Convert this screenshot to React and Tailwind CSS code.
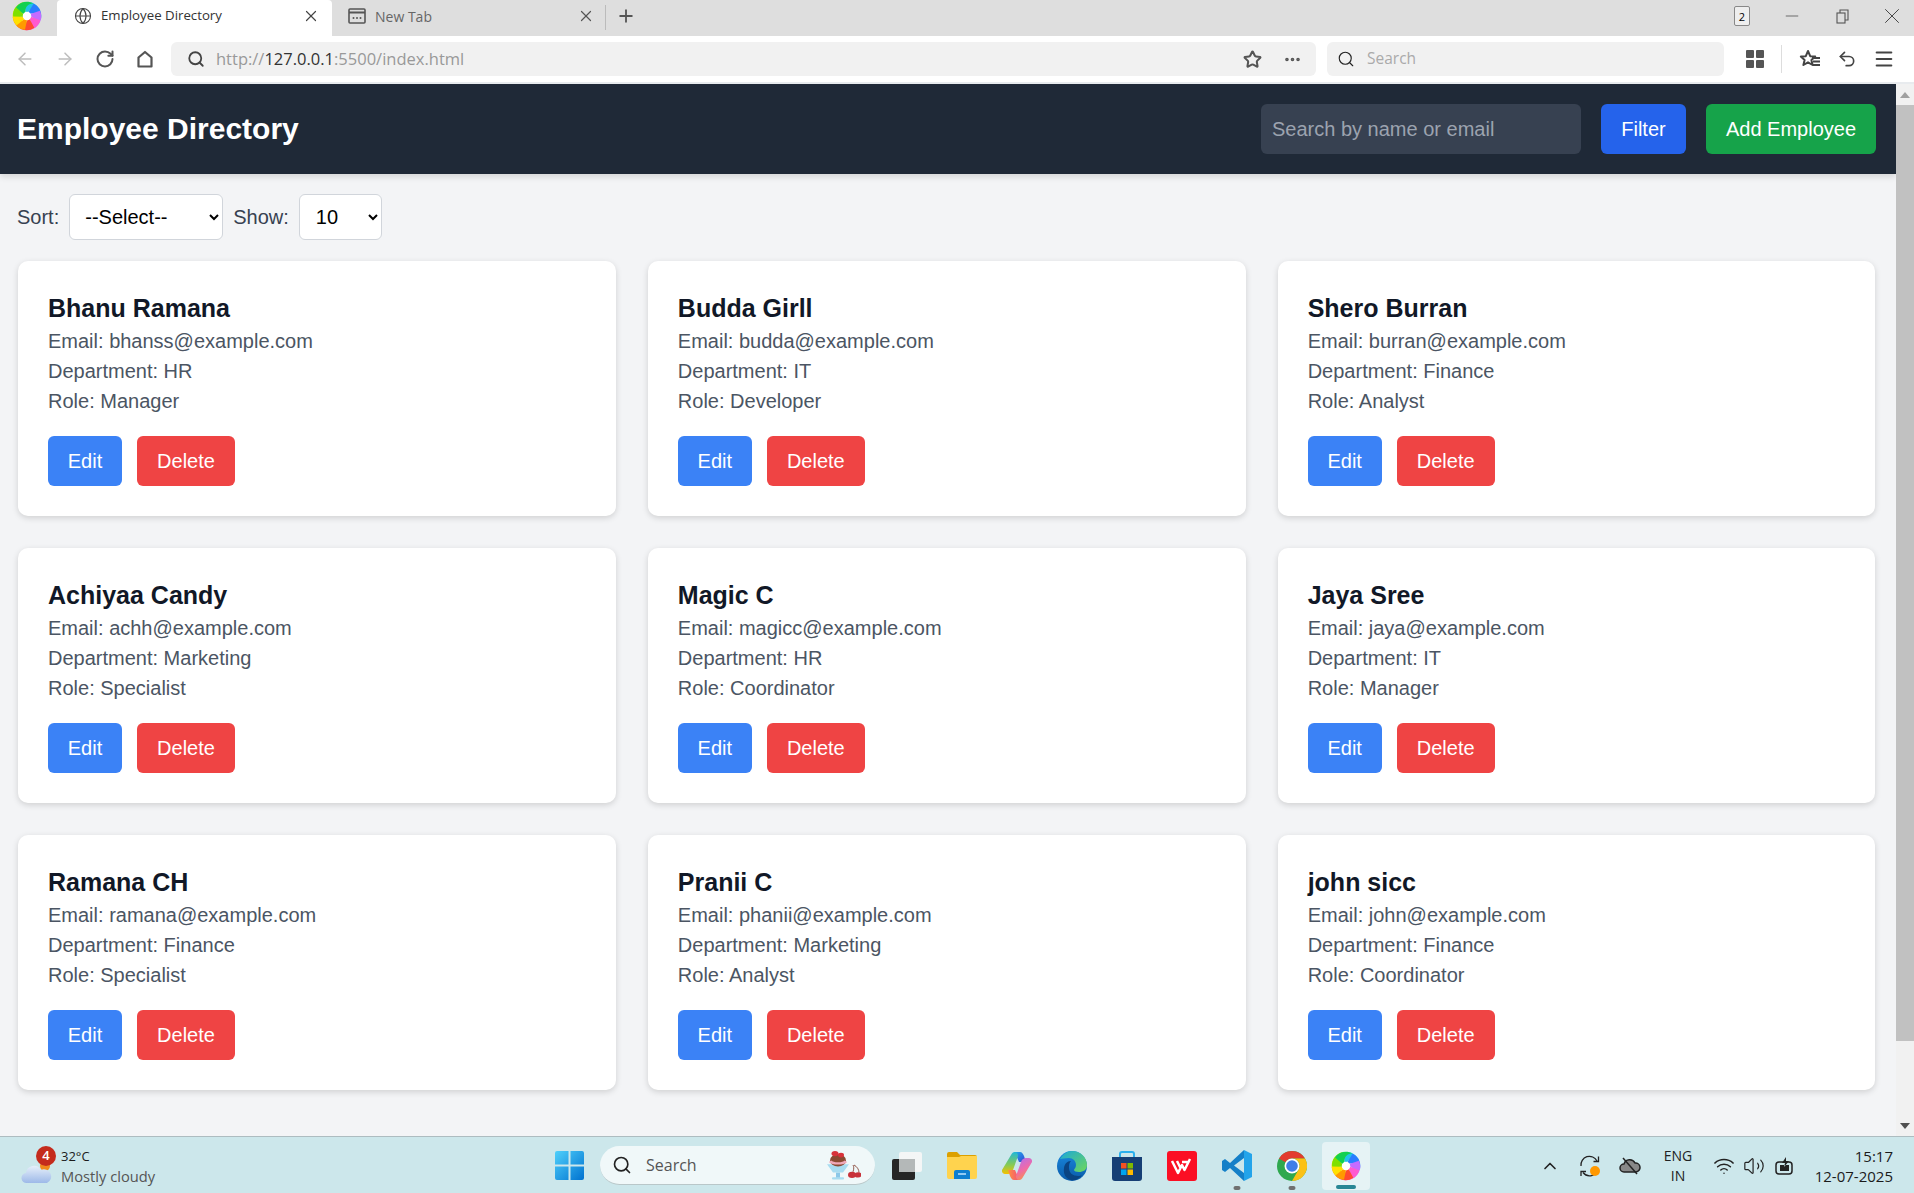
import React from "react";
import { ArrowLeft, ArrowRight, RotateCw, Search, Star, Ellipsis, X, Plus, Globe, Minus, Undo2, Menu, ChevronUp, Wifi, Volume2 } from "lucide-react";

const employees = [
  { name: "Bhanu Ramana", email: "bhanss@example.com", department: "HR", role: "Manager" },
  { name: "Budda Girll", email: "budda@example.com", department: "IT", role: "Developer" },
  { name: "Shero Burran", email: "burran@example.com", department: "Finance", role: "Analyst" },
  { name: "Achiyaa Candy", email: "achh@example.com", department: "Marketing", role: "Specialist" },
  { name: "Magic C", email: "magicc@example.com", department: "HR", role: "Coordinator" },
  { name: "Jaya Sree", email: "jaya@example.com", department: "IT", role: "Manager" },
  { name: "Ramana CH", email: "ramana@example.com", department: "Finance", role: "Specialist" },
  { name: "Pranii C", email: "phanii@example.com", department: "Marketing", role: "Analyst" },
  { name: "john sicc", email: "john@example.com", department: "Finance", role: "Coordinator" },
];

function SwirlLogo({ size = 32 }) {
  const colors = ["#20c4e8", "#2a7dff", "#c66bff", "#ff5ad0", "#ff4a30", "#ff9a00", "#ffe000", "#7fe000", "#12d050"];
  return (
    <svg width={size} height={size} viewBox="0 0 32 32" fill="none" className="blur-[0.5px]">
      {colors.map((c, i) => (
        <path
          key={c}
          d="M13 1.500C20 -0.500 27 3 30 10C26 7 21 7 18 11C17 12 16 12.500 14.500 12Z"
          fill={c}
          transform={`rotate(${i * 40} 16 16)`}
        />
      ))}
      <circle cx="16" cy="16" r="4.500" fill="#fff" />
    </svg>
  );
}

function HomeIcon() {
  return (
    <svg width="20" height="20" viewBox="0 0 20 20" fill="none" stroke="#555" strokeWidth="2.2">
      <path d="M3.500 17.500V8.500L10 3l6.500 5.500v9z" strokeLinejoin="round" />
    </svg>
  );
}

function GridIcon() {
  return (
    <svg width="18" height="18" viewBox="0 0 18 18" fill="#555">
      <rect x="0" y="0" width="8" height="8" rx="1" />
      <rect x="10" y="0" width="8" height="8" rx="1" />
      <rect x="0" y="10" width="8" height="8" rx="1" />
      <rect x="10" y="10" width="8" height="8" rx="1" />
    </svg>
  );
}

function FavListIcon() {
  return (
    <svg width="22" height="20" viewBox="0 0 22 20" fill="none" stroke="#444" strokeWidth="2">
      <path d="M9 2l2.200 5.200 5 .4-3.800 3.300 1.200 5.100L9 13.300 4.400 16l1.200-5.100L1.800 7.600l5-.4z" strokeLinejoin="round" />
      <path d="M13 9h8M14 12.500h7M14 16h7" />
    </svg>
  );
}

function TabPageIcon() {
  return (
    <svg width="18" height="18" viewBox="0 0 18 18" fill="none">
      <rect x="1" y="2" width="16" height="14" rx="1" stroke="#555" strokeWidth="1.600" />
      <path d="M1 5.500h16" stroke="#555" strokeWidth="2" />
      <circle cx="5.500" cy="11" r="1" fill="#555" />
      <circle cx="9" cy="11" r="1" fill="#555" />
      <circle cx="12.500" cy="11" r="1" fill="#555" />
    </svg>
  );
}

function BrowserChrome() {
  return (
    <div className="shrink-0 font-['Open_Sans',sans-serif]">
      <div className="flex h-9 items-stretch bg-[#dedede]">
        <div className="flex w-[57px] items-center justify-center pb-[4px] pr-[3px]">
          <SwirlLogo size={30} />
        </div>
        <div className="flex w-[275px] items-center rounded-t-sm bg-white pb-[4px] pl-[17px] pr-[12px]">
          <Globe size={18} strokeWidth={1.5} className="text-[#444]" />
          <span className="ml-[9px] flex-1 text-[13.250px] text-[#333]">Employee Directory</span>
          <X size={18} strokeWidth={1.6} className="text-[#444]" />
        </div>
        <div className="flex w-[273px] items-center pb-[4px] pl-[16px] pr-[10px]">
          <TabPageIcon />
          <span className="ml-[9px] flex-1 text-[14px] text-[#666]">New Tab</span>
          <X size={18} strokeWidth={1.6} className="text-[#555]" />
        </div>
        <div className="mb-[6px] mt-[5px] w-px bg-[#bbb]" />
        <div className="flex w-[40px] items-center justify-center pb-[4px]">
          <Plus size={20} strokeWidth={2.2} className="text-[#555]" />
        </div>
        <div className="flex flex-1 items-center justify-end pb-[4px]">
          <div className="flex h-[20px] w-[16px] items-center justify-center rounded-[2px] border-[1.500px] border-[#888] bg-[#eee] text-[11px] leading-none text-black">2</div>
          <div className="ml-[17px] flex w-[50px] items-center justify-center">
            <Minus size={20} strokeWidth={1} className="text-[#555]" />
          </div>
          <div className="flex w-[50px] items-center justify-center">
            <svg width="13" height="15" viewBox="0 0 13 15" fill="none" stroke="#555" strokeWidth="1.100">
              <rect x="1" y="4" width="8" height="10" />
              <path d="M4 4V1h8v10H9" />
            </svg>
          </div>
          <div className="flex w-[47px] items-center justify-center pl-[3px]">
            <X size={26} strokeWidth={0.9} className="text-[#444]" />
          </div>
        </div>
      </div>
      <div className="flex h-[46px] items-center bg-white">
        <div className="flex w-[171px] items-center pl-[5px]">
          <div className="flex w-[40px] justify-center"><ArrowLeft size={20} strokeWidth={1.8} className="text-[#bdbdbd]" /></div>
          <div className="flex w-[40px] justify-center"><ArrowRight size={20} strokeWidth={1.8} className="text-[#bdbdbd]" /></div>
          <div className="flex w-[40px] justify-center"><RotateCw size={20} strokeWidth={2.4} className="text-[#555]" /></div>
          <div className="flex w-[40px] justify-center"><HomeIcon /></div>
        </div>
        <div className="flex h-[34px] w-[1145px] items-center rounded-md bg-[#f1f1f1] pl-[16px] pr-[14px]">
          <Search size={18} strokeWidth={2.4} className="text-[#444]" />
          <span className="ml-[11px] flex-1 text-[16.500px] text-[#999]">
            http://<span className="text-[#333]">127.0.0.1</span>:5500/index.html
          </span>
          <Star size={19} strokeWidth={2.6} className="text-[#555]" />
          <Ellipsis size={19} strokeWidth={2.6} className="ml-[21px] text-[#555]" />
        </div>
        <div className="ml-[11px] flex h-[34px] w-[397px] items-center rounded-md bg-[#f1f1f1] pl-[10px]">
          <Search size={18} strokeWidth={1.500} className="text-[#222]" />
          <span className="ml-[12px] text-[15.500px] text-[#aaa]">Search</span>
        </div>
        <div className="flex flex-1 items-center pl-[22px]">
          <GridIcon />
          <div className="ml-[17px] h-[28px] w-px bg-[#ddd]" />
          <span className="ml-[17px]"><FavListIcon /></span>
          <Undo2 size={20} strokeWidth={2} className="ml-[16px] text-[#444]" />
          <Menu size={22} strokeWidth={2.200} className="ml-[16px] text-[#444]" />
        </div>
      </div>
      <div className="h-[2px] bg-[#e8ebee]" />
    </div>
  );
}

function EmployeeCard({ employee }) {
  return (
    <div className="rounded-[10px] bg-white p-[30px] shadow-[0_2px_6px_rgba(0,0,0,0.15)]">
      <h2 className="text-[25px] leading-[35px] font-bold text-[#111827]">{employee.name}</h2>
      <p className="text-[20px] leading-[30px] text-[#4b5563]">Email: {employee.email}</p>
      <p className="text-[20px] leading-[30px] text-[#4b5563]">Department: {employee.department}</p>
      <p className="text-[20px] leading-[30px] text-[#4b5563]">Role: {employee.role}</p>
      <div className="mt-[20px] flex gap-[15px]">
        <button type="button" className="h-[50px] w-[74px] rounded-[6px] bg-[#3b82f6] text-[20px] text-white">Edit</button>
        <button type="button" className="h-[50px] w-[98px] rounded-[6px] bg-[#ef4444] text-[20px] text-white">Delete</button>
      </div>
    </div>
  );
}

function Scrollbar() {
  return (
    <div className="flex w-[18px] shrink-0 flex-col items-center bg-[#f1f1f1]">
      <div className="flex h-[21px] items-center justify-center">
        <div className="h-0 w-0 border-x-[5px] border-b-[6px] border-x-transparent border-b-[#a0a0a0]" />
      </div>
      <div className="h-[936px] w-full bg-[#c1c1c1]" />
      <div className="flex-1" />
      <div className="flex h-[21px] items-center justify-center">
        <div className="h-0 w-0 border-x-[5px] border-t-[6px] border-x-transparent border-t-[#505050]" />
      </div>
    </div>
  );
}

function Directory() {
  return (
    <div className="min-w-0 flex-1 overflow-hidden bg-[#f3f4f6] font-['Liberation_Sans',Arial,sans-serif]">
      <header className="flex h-[90px] items-center bg-[#1f2937] pl-[17px] pr-[20px] shadow-[0_3px_6px_rgba(0,0,0,0.12)]">
        <h1 className="flex-1 pb-[2px] text-[30px] font-bold text-white">Employee Directory</h1>
        <input
          readOnly
          placeholder="Search by name or email"
          className="h-[50px] w-[320px] rounded-[6px] bg-[#374151] px-[11px] text-[20px] text-white outline-none placeholder:text-[#9ca3af]"
        />
        <button type="button" className="ml-[20px] h-[50px] w-[85px] rounded-[6px] bg-[#2563eb] text-[20px] text-white">Filter</button>
        <button type="button" className="ml-[20px] h-[50px] w-[170px] rounded-[6px] bg-[#16a34a] text-[20px] text-white">Add Employee</button>
      </header>
      <div className="mt-[20px] flex items-center pl-[17px] text-[20px] text-[#374151]">
        <span>Sort:</span>
        <select defaultValue="" className="ml-[10px] h-[46px] w-[154px] rounded-[6px] border border-[#d1d5db] bg-white pl-[11px] text-black">
          <option value="">--Select--</option>
        </select>
        <span className="ml-[10px]">Show:</span>
        <select defaultValue="10" className="ml-[10px] h-[46px] w-[83px] rounded-[6px] border border-[#d1d5db] bg-white pl-[12px] text-black">
          <option value="10">10</option>
        </select>
      </div>
      <div className="mt-[21px] grid grid-cols-3 gap-x-[32px] gap-y-[32px] pl-[18px] pr-[20.500px]">
        {employees.map((employee) => (
          <EmployeeCard key={employee.email} employee={employee} />
        ))}
      </div>
    </div>
  );
}

function WeatherIcon() {
  return (
    <div className="relative h-[40px] w-[36px]">
      <svg width="32" height="24" viewBox="0 0 32 24" className="absolute bottom-[1px] left-0">
        <defs>
          <linearGradient id="cloud" x1="0" y1="0" x2="0" y2="1">
            <stop offset="0" stopColor="#e6effa" />
            <stop offset="1" stopColor="#9db9e8" />
          </linearGradient>
        </defs>
        <circle cx="24" cy="5" r="5" fill="#f08a1c" />
        <path d="M6 22a5 5 0 0 1-1-10 8 8 0 0 1 15-3 6.500 6.500 0 0 1 6 13z" fill="url(#cloud)" />
      </svg>
      <div className="absolute left-[15px] top-0 flex h-[20px] w-[20px] items-center justify-center rounded-full bg-[#c42b1c] text-[13px] font-semibold text-white">4</div>
    </div>
  );
}

function WinLogo() {
  return (
    <svg width="29" height="29" viewBox="0 0 29 29">
      <defs>
        <linearGradient id="win" x1="0" y1="0" x2="1" y2="1">
          <stop offset="0" stopColor="#4fd0fb" />
          <stop offset="1" stopColor="#0072d0" />
        </linearGradient>
      </defs>
      <path d="M0 2a2 2 0 0 1 2-2h11.500v13.500H0zM15.500 0H27a2 2 0 0 1 2 2v11.500H15.500zM0 15.500h13.500V29H2a2 2 0 0 1-2-2zM15.500 15.500H29V27a2 2 0 0 1-2 2H15.500z" fill="url(#win)" />
    </svg>
  );
}

function TaskViewIcon() {
  return (
    <svg width="30" height="28" viewBox="0 0 30 28">
      <rect x="0" y="7" width="23" height="21" rx="2" fill="#262626" />
      <rect x="7" y="0" width="23" height="20" rx="2" fill="#f4f6f6" />
      <rect x="7" y="7" width="16" height="13" fill="#b4b8b8" />
    </svg>
  );
}

function FolderIcon() {
  return (
    <svg width="30" height="27" viewBox="0 0 30 27">
      <path d="M0 2a2 2 0 0 1 2-2h8l3 3h15a2 2 0 0 1 2 2v4H0z" fill="#dca000" />
      <path d="M0 5h12l2-1h16v21a2 2 0 0 1-2 2H2a2 2 0 0 1-2-2z" fill="#ffd34e" />
      <path d="M7 27v-7a2 2 0 0 1 2-2h12a2 2 0 0 1 2 2v7z" fill="#0f7fd0" />
      <path d="M11 22h8" stroke="#bfe3ff" strokeWidth="1.500" />
    </svg>
  );
}

function CopilotIcon() {
  return (
    <svg width="30" height="28" viewBox="0 0 30 28">
      <defs>
        <linearGradient id="cop1" x1="0" y1="0" x2="1" y2="1">
          <stop offset="0" stopColor="#1fb4e8" />
          <stop offset="0.6" stopColor="#2a6fe0" />
          <stop offset="1" stopColor="#3a3fc0" />
        </linearGradient>
        <linearGradient id="cop3" x1="0" y1="0" x2="0" y2="1">
          <stop offset="0" stopColor="#1fb8d8" />
          <stop offset="0.6" stopColor="#8acb50" />
          <stop offset="1" stopColor="#f7c000" />
        </linearGradient>
        <linearGradient id="cop2" x1="0" y1="0" x2="0.4" y2="1">
          <stop offset="0" stopColor="#b070f0" />
          <stop offset="0.6" stopColor="#f06aa8" />
          <stop offset="1" stopColor="#f59050" />
        </linearGradient>
        <linearGradient id="cop4" x1="0" y1="0" x2="1" y2="0">
          <stop offset="0" stopColor="#ff9040" />
          <stop offset="1" stopColor="#f04a80" />
        </linearGradient>
      </defs>
      <path d="M11 0h7c2 0 3 2 4 4l2 6h-7l-3-7c-.6-1.500-1.500-3-3-3z" fill="url(#cop1)" />
      <path d="M9 3c1-2 2-3 4-3 2 0 3 2 3 4l-5 14c-1 3-3 4-5 4H3c-2 0-3.500-2-3-4z" fill="url(#cop3)" />
      <path d="M19 28h-7c-2 0-3-2-4-4l-2-6h7l3 7c.6 1.500 1.500 3 3 3z" fill="url(#cop4)" />
      <path d="M21 25c-1 2-2 3-4 3-2 0-3-2-3-4l5-14c1-3 3-4 5-4h3c2 0 3.500 2 3 4z" fill="url(#cop2)" />
    </svg>
  );
}

function EdgeIcon() {
  return (
    <svg width="30" height="30" viewBox="0 0 30 30">
      <defs>
        <linearGradient id="edge1" x1="0" y1="0" x2="1" y2="1">
          <stop offset="0" stopColor="#1ba8d8" />
          <stop offset="1" stopColor="#6fd85a" />
        </linearGradient>
        <linearGradient id="edge2" x1="0" y1="0" x2="0" y2="1">
          <stop offset="0" stopColor="#1a8ae0" />
          <stop offset="1" stopColor="#0a5aa8" />
        </linearGradient>
      </defs>
      <circle cx="15" cy="15" r="15" fill="url(#edge2)" />
      <path d="M3 8C6 3 10 0 15 0c8 0 15 6 15 14 0 5-4 7-8 7-3 0-5-1-5-2 0-1 2-2 2-5 0-4-3-7-7-7-4 0-7 1-9 1z" fill="url(#edge1)" />
      <path d="M12 17c0 5 4 8 9 8 2 0 3-.3 4-1-3 4-7 6-11 5-5-1-8-6-7-12 .6-4 3-7 7-7-2 2-2 4-2 7z" fill="#0a4482" />
    </svg>
  );
}

function StoreIcon() {
  return (
    <svg width="30" height="30" viewBox="0 0 30 30">
      <path d="M8 7V3a2 2 0 0 1 2-2h10a2 2 0 0 1 2 2v4" fill="none" stroke="#2ab0ee" strokeWidth="2" />
      <path d="M0 6h30v21a3 3 0 0 1-3 3H3a3 3 0 0 1-3-3z" fill="#163f75" />
      <rect x="9" y="12" width="5.500" height="5.500" fill="#f25022" />
      <rect x="15.500" y="12" width="5.500" height="5.500" fill="#7fba00" />
      <rect x="9" y="18.500" width="5.500" height="5.500" fill="#00a4ef" />
      <rect x="15.500" y="18.500" width="5.500" height="5.500" fill="#ffb900" />
    </svg>
  );
}

function WpsIcon() {
  return (
    <svg width="30" height="30" viewBox="0 0 30 30">
      <rect width="30" height="30" rx="3" fill="#fb0f24" />
      <path d="M5 10l6 12 4-8 2.500 5L23 8M10 10l3.500 7M15 11h6" fill="none" stroke="#fff" strokeWidth="2.500" strokeLinejoin="round" />
    </svg>
  );
}

function VsCodeIcon() {
  return (
    <svg width="30" height="31" viewBox="0 0 30 31">
      <path d="M22 0L8 13 3 9 0 11v9l3 2 5-4 14 13v-8L12 15.500 22 8z" fill="#1580c8" />
      <path d="M22 0l8 4v23l-8 4z" fill="#24a4ea" />
    </svg>
  );
}

function ChromeIcon() {
  return (
    <svg width="30" height="30" viewBox="0 0 30 30">
      <circle cx="15" cy="15" r="15" fill="#2fa84f" />
      <path d="M15 0A15 15 0 0 1 28 7.500H15A7.500 7.500 0 0 0 8.500 11.250L2 7.500A15 15 0 0 1 15 0z" fill="#e33b2e" />
      <path d="M28 7.500A15 15 0 0 1 15 30L21.500 18.750A7.500 7.500 0 0 0 15 7.500z" fill="#fbc116" />
      <circle cx="15" cy="15" r="7.500" fill="#fff" />
      <circle cx="15" cy="15" r="5.800" fill="#3f7ee8" />
    </svg>
  );
}

function SundaeIcon() {
  return (
    <svg width="36" height="32" viewBox="0 0 36 42" preserveAspectRatio="none">
      <path d="M2 20h22l-6 11h-10z" fill="#a8dcf0" />
      <rect x="11" y="31" width="4" height="7" fill="#8cc8e8" />
      <rect x="7" y="37" width="12" height="3" rx="1" fill="#a8dcf0" />
      <circle cx="13" cy="15" r="8" fill="#8a4a32" />
      <path d="M5 16c3 4 13 4 16 0" stroke="#f0a8b8" strokeWidth="3" fill="none" />
      <circle cx="10" cy="6" r="3.500" fill="#d8323a" />
      <circle cx="16" cy="8" r="3" fill="#d8323a" />
      <path d="M28 30c1-4 1-7 0-9M34 31c0-4-2-8-5-10" stroke="#7a3020" strokeWidth="0.900" fill="none" />
      <circle cx="27" cy="34" r="4" fill="#c8323a" />
      <circle cx="33" cy="34" r="3.500" fill="#c8323a" />
    </svg>
  );
}

function SyncIcon() {
  return (
    <svg width="24" height="24" viewBox="0 0 24 24" fill="none" stroke="#222" strokeWidth="1.300">
      <path d="M3 12a8.500 8.500 0 0 1 16-5" />
      <path d="M20.500 2.500v5h-5" />
      <path d="M20 15a8.500 8.500 0 0 1-15 3.500" />
      <path d="M3 22v-4.500h5" />
    </svg>
  );
}

function Taskbar() {
  const running = "absolute bottom-[1px] left-1/2 h-[4px] w-[7px] -translate-x-1/2 rounded-full bg-[#707070]";
  return (
    <div className="relative flex h-[57px] shrink-0 items-center border-t border-[#adbcc0] bg-[#cce7eb] pt-[1px] font-['Open_Sans',sans-serif] text-[#1b1b1b]">
      <div className="flex w-[555px] items-center pl-[21px]">
        <WeatherIcon />
        <div className="ml-[4px] leading-[20px]">
          <div className="text-[13px]">32°C</div>
          <div className="text-[14.700px] text-[#555]">Mostly cloudy</div>
        </div>
      </div>
      <WinLogo />
      <div className="ml-[16px] flex h-[39px] w-[275px] items-center rounded-full border-b border-[#b9c7c9] bg-[#f0f8f9] pl-[12px] pr-[14px]">
        <Search size={20} strokeWidth={2} className="text-[#222]" />
        <span className="ml-[14px] flex-1 text-[16px] text-[#555]">Search</span>
        <SundaeIcon />
      </div>
      <div className="ml-[4px] flex items-center">
        <div className="flex h-[50px] w-[55px] items-center justify-center"><TaskViewIcon /></div>
        <div className="flex h-[50px] w-[55px] items-center justify-center"><FolderIcon /></div>
        <div className="flex h-[50px] w-[55px] items-center justify-center"><CopilotIcon /></div>
        <div className="flex h-[50px] w-[55px] items-center justify-center"><EdgeIcon /></div>
        <div className="flex h-[50px] w-[55px] items-center justify-center"><StoreIcon /></div>
        <div className="flex h-[50px] w-[55px] items-center justify-center"><WpsIcon /></div>
        <div className="relative flex h-[50px] w-[55px] items-center justify-center"><VsCodeIcon /><div className={running} /></div>
        <div className="relative flex h-[50px] w-[55px] items-center justify-center"><ChromeIcon /><div className={running} /></div>
        <div className="relative ml-[3px] flex h-[48px] w-[48px] items-center justify-center rounded-[4px] bg-[#e6f3f5]">
          <SwirlLogo size={30} />
          <div className="absolute bottom-[1px] left-1/2 h-[4px] w-[20px] -translate-x-1/2 rounded-full bg-[#2a8795]" />
        </div>
      </div>
      <div className="ml-[170px] flex items-center text-[#222]">
        <ChevronUp size={20} strokeWidth={2} />
        <div className="relative ml-[18px] h-[24px] w-[24px]">
          <SyncIcon />
          <div className="absolute bottom-[2px] right-[2px] h-[10px] w-[10px] rounded-full bg-[#ff9800]" />
        </div>
        <svg width="24" height="20" viewBox="0 0 22 20" className="ml-[16px]">
          <path d="M5 16a4 4 0 0 1 0-8 6 6 0 0 1 11-1 4.500 4.500 0 0 1 1 9z" fill="#888" stroke="#222" strokeWidth="1.500" />
          <path d="M4 2l14 16" stroke="#222" strokeWidth="1.500" />
        </svg>
        <div className="ml-[16px] w-[40px] text-center text-[14px] leading-[20px]">ENG<br />IN</div>
        <Wifi size={22} strokeWidth={1.600} className="ml-[15px]" />
        <Volume2 size={22} strokeWidth={1.300} className="ml-[8px]" />
        <svg width="22" height="22" viewBox="0 0 22 22" className="ml-[9px]">
          <rect x="2" y="7" width="16" height="12" rx="3" fill="none" stroke="#222" strokeWidth="1.500" />
          <path d="M6 10h9v6H6zM12 2l-4 6h3l-1 4 5-6h-3z" fill="#222" />
        </svg>
      </div>
      <div className="ml-auto pr-[21px] text-right text-[15px] leading-[20px]">
        <div>15:17</div>
        <div>12-07-2025</div>
      </div>
    </div>
  );
}

export default function App() {
  return (
    <div className="flex h-[1193px] w-[1914px] flex-col overflow-hidden">
      <BrowserChrome />
      <div className="flex min-h-0 flex-1">
        <Directory />
        <Scrollbar />
      </div>
      <Taskbar />
    </div>
  );
}
